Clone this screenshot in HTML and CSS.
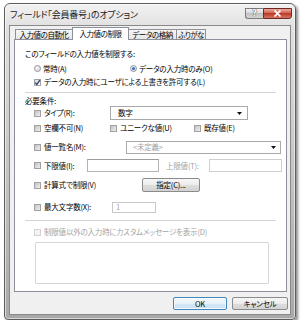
FILE: index.html
```html
<!DOCTYPE html>
<html lang="ja">
<head>
  <meta charset="UTF-8">
  <meta name="viewport" content="width=device-width, initial-scale=1.0">
  <title>フィールド「会員番号」のオプション</title>
  <link rel="stylesheet" href="styles.css">
</head>
<body>
  <div class="window">
    <div class="titlebar">
      <span class="title">フィールド「会員番号」のオプション</span>
      <div class="caption-buttons">
        <span class="cap-btn help">?</span>
        <span class="cap-btn close">
          <svg width="9" height="7" viewBox="0 0 9 7"><path d="M1.5 0.5 L7.5 6.5 M7.5 0.5 L1.5 6.5" stroke="#fff" stroke-width="1.7"/></svg>
        </span>
      </div>
    </div>
    <div class="client">
      <div class="tabs">
        <span class="tab tab-auto">入力値の自動化</span>
        <span class="tab tab-limit active">入力値の制限</span>
        <span class="tab tab-store">データの格納</span>
        <span class="tab tab-kana">ふりがな</span>
      </div>
      <div class="panel">
        <div class="row row-caption">このフィールドの入力値を制限する:</div>
        <div class="row row-radio indent">
          <label class="option option-always"><span class="radio"></span>常時(A)</label>
          <label class="option"><span class="radio checked"></span>データの入力時のみ(O)</label>
        </div>
        <div class="row row-override indent">
          <span class="check checked">
            <svg width="7" height="7" viewBox="0 0 7 7"><path d="M1.2 3.6 L2.8 5.4 L5.9 1.2" fill="none" stroke="#2b3f7a" stroke-width="1.3"/></svg>
          </span>データの入力時にユーザによる上書きを許可する(L)
        </div>
        <div class="separator"></div>

        <div class="row row-heading">必要条件:</div>
        <div class="row row-type indent">
          <label class="cell cell-type"><span class="check"></span>タイプ(R):</label>
          <div class="select select-type">
            <span>数字</span>
            <svg width="5" height="3" viewBox="0 0 5 3"><path d="M0 0 H5 L2.5 3 Z" fill="#111"/></svg>
          </div>
        </div>
        <div class="row row-flags indent">
          <label class="cell cell-empty"><span class="check"></span>空欄不可(N)</label>
          <label class="cell cell-unique"><span class="check"></span>ユニークな値(U)</label>
          <label class="cell"><span class="check"></span>既存値(E)</label>
        </div>
        <div class="row row-list indent">
          <label class="cell cell-list"><span class="check"></span>値一覧名(M):</label>
          <div class="select select-list">
            <span class="muted">&lt;未定義&gt;</span>
            <svg width="5" height="3" viewBox="0 0 5 3"><path d="M0 0 H5 L2.5 3 Z" fill="#111"/></svg>
          </div>
        </div>
        <div class="row row-range indent">
          <label class="cell cell-min"><span class="check"></span>下限値(I):</label>
          <div class="textbox textbox-min"></div>
          <span class="range-label muted">上限値(T):</span>
          <div class="textbox textbox-max"></div>
        </div>
        <div class="row row-formula indent">
          <label class="cell cell-formula"><span class="check"></span>計算式で制限(V)</label>
          <span class="btn btn-formula">指定(C)...</span>
        </div>
        <div class="row row-maxlen indent">
          <label class="cell cell-maxlen"><span class="check"></span>最大文字数(X):</label>
          <div class="textbox textbox-maxlen"><span class="muted">1</span></div>
        </div>
        <div class="separator separator-bottom"></div>

        <div class="row row-custom indent muted">
          <span class="check disabled"></span>制限値以外の入力時にカスタムメッセージを表示(D)
        </div>
        <div class="message-box"></div>
      </div>
      <div class="dialog-buttons">
        <span class="btn btn-default">OK</span>
        <span class="btn btn-cancel">キャンセル</span>
      </div>
    </div>
  </div>
</body>
</html>
```

FILE: styles.css
```css
body {
  margin: 0;
  background: #fff;
  font-family: "Noto Sans CJK JP", "Noto Sans", sans-serif;
  font-size: 7.5px;
  font-feature-settings: "palt";
  letter-spacing: -0.2px;
  color: #000;
}

.window {
  width: 292px;
  height: 317px;
  margin: 3px 0 0 4px;
  box-sizing: border-box;
  border: 1px solid #5e5e5e;
  border-radius: 6px 6px 4px 4px;
  padding: 0 4px 4px;
  background: linear-gradient(#f2f2f2, #e0e0e0 24px, #c0c0c0 60%, #a8a8a8);
  box-shadow: 2px 2px 3px rgba(0, 0, 0, 0.45), inset 0 0 0 1px rgba(255, 255, 255, 0.55);
  display: flex;
  flex-direction: column;
}

.titlebar {
  height: 21px;
  display: flex;
  justify-content: space-between;
  align-items: flex-start;
}

.title {
  margin: 4px 0 0 1px;
  font-size: 9px;
  line-height: 13px;
  letter-spacing: -0.25px;
  color: #222;
}

.caption-buttons {
  display: flex;
  margin: 4px -1px 0 0;
}

.cap-btn {
  height: 11px;
  box-sizing: border-box;
  display: flex;
  align-items: center;
  justify-content: center;
}

.help {
  width: 18px;
  border: 1px solid #7c7c7c;
  border-right: none;
  border-radius: 0 0 0 3px;
  background: linear-gradient(#f4f4f4, #d6d6d6 50%, #c2c2c2 50%, #d4d4d4);
  color: #fff;
  font-family: "DejaVu Sans", sans-serif;
  font-weight: bold;
  font-size: 8px;
  text-shadow: 0 0 1px #444, 0 0 1px #444;
}

.close {
  width: 29px;
  border: 1px solid #6e2a22;
  border-radius: 0 0 3px 0;
  background: linear-gradient(#e9a99f, #cf5a4a 50%, #bd3a26 50%, #d47562);
}

.client {
  flex: 1;
  box-sizing: border-box;
  border: 1px solid #8a8a8a;
  background: #f0f0f0;
  padding: 1px 0 0 4px;
  display: flex;
  flex-direction: column;
}

.tabs {
  height: 13px;
  margin-bottom: -1px;
  padding-left: 1px;
  display: flex;
  align-items: flex-start;
  letter-spacing: -0.45px;
}

.tab {
  height: 10px;
  margin-top: 2px;
  margin-left: -1px;
  box-sizing: border-box;
  border: 1px solid #8d9098;
  border-bottom: none;
  background: linear-gradient(#f6f6f6, #e6e6e6);
  display: flex;
  align-items: center;
  justify-content: center;
  line-height: 1;
  white-space: nowrap;
}

.tab-auto { width: 58px; margin-left: 0; }
.tab-limit { width: 57px; }
.tab-store { width: 49px; }
.tab-kana { width: 30px; letter-spacing: -0.7px; }

.tab.active {
  height: 13px;
  margin-top: 0;
  background: #fff;
  position: relative;
  z-index: 1;
}

.panel {
  width: 273px;
  height: 253px;
  box-sizing: border-box;
  border: 1px solid #8d9098;
  background: #fff;
  padding: 6px 10px 0;
}

.row {
  display: flex;
  align-items: center;
  line-height: 1;
  white-space: nowrap;
}

.indent { padding-left: 9px; }

.row-caption { height: 15px; }
.row-radio { height: 15px; }
.row-override { height: 12px; }
.row-heading { height: 9px; }
.row-type { height: 16px; }
.row-flags { height: 14px; }
.row-list { height: 24px; }
.row-range { height: 13px; }
.row-formula { height: 26px; }
.row-maxlen { height: 18px; }
.row-custom { height: 14px; }

.separator {
  margin: 4px 0 3px;
  border-top: 1px solid #d3d3d3;
}

.separator-bottom { margin-bottom: 4px; }

.option,
.cell {
  display: flex;
  align-items: center;
  flex: none;
}

.option-always { width: 96px; }
.cell-type { width: 76px; }
.cell-empty { width: 76px; }
.cell-unique { width: 84px; }
.cell-list { width: 92px; }
.cell-min { width: 53px; }
.cell-formula { width: 108px; }
.cell-maxlen { width: 78px; }

.radio {
  width: 7px;
  height: 7px;
  margin-right: 2px;
  box-sizing: border-box;
  border: 1px solid #959595;
  border-radius: 50%;
  background: radial-gradient(circle at 35% 35%, #fafafa, #d2d2d2);
  display: flex;
  align-items: center;
  justify-content: center;
}

.radio.checked::after {
  content: "";
  width: 3px;
  height: 3px;
  border-radius: 50%;
  background: #2a74c9;
}

.check {
  width: 7px;
  height: 7px;
  margin-right: 3px;
  flex: none;
  box-sizing: border-box;
  border: 1px solid #a2a2a2;
  background: linear-gradient(135deg, #c4c4c4, #eeeeee);
  display: flex;
}

.check.checked {
  background: linear-gradient(135deg, #dcdcdc, #fbfbfb);
}

.check svg {
  margin: -1px;
}

.check.disabled {
  border-color: #d2d2d2;
  background: #f4f4f4;
}

.muted { color: #a3a3a3; }

.select {
  box-sizing: border-box;
  border: 1px solid #a9a9a9;
  background: #fff;
  display: flex;
  align-items: center;
  justify-content: space-between;
  flex: none;
}

.select-type {
  width: 138px;
  height: 14px;
  padding: 0 5px 0 7px;
}

.select-list {
  width: 155px;
  height: 13px;
  padding: 0 4px 0 6px;
}

.textbox {
  box-sizing: border-box;
  border: 1px solid #b3b3b3;
  border-top-color: #9c9c9c;
  background: #fff;
  flex: none;
  display: flex;
  align-items: center;
}

.textbox-min { width: 72px; height: 13px; }

.range-label {
  width: 43px;
  margin-left: 7px;
  flex: none;
}

.textbox-max {
  width: 73px;
  height: 13px;
  border-color: #cfcfcf;
}

.textbox-maxlen {
  width: 44px;
  height: 11px;
  padding-left: 3px;
  border-color: #c9c9c9;
}

.message-box {
  width: 234px;
  height: 42px;
  margin: 3px 0 0 10px;
  box-sizing: border-box;
  border: 1px solid #d6d6d6;
  border-radius: 1px;
}

.btn {
  box-sizing: border-box;
  border: 1px solid #8b8b8b;
  border-radius: 2px;
  background: linear-gradient(#f7f7f7, #ececec 50%, #dedede 50%, #d2d2d2);
  display: flex;
  align-items: center;
  justify-content: center;
  line-height: 1;
  flex: none;
}

.btn-formula {
  width: 58px;
  height: 14px;
}

.dialog-buttons {
  margin-top: 5px;
  padding-right: 2px;
  display: flex;
  justify-content: flex-end;
  gap: 5px;
}

.dialog-buttons .btn { height: 13px; }

.btn-default {
  width: 54px;
  border-color: #3f86bd;
  background: linear-gradient(#f2f8fc, #e6f1f9 50%, #d6e8f5 50%, #c9e1f3);
  box-shadow: inset 0 0 0 1px rgba(255, 255, 255, 0.7);
}

.btn-cancel { width: 56px; }
```
